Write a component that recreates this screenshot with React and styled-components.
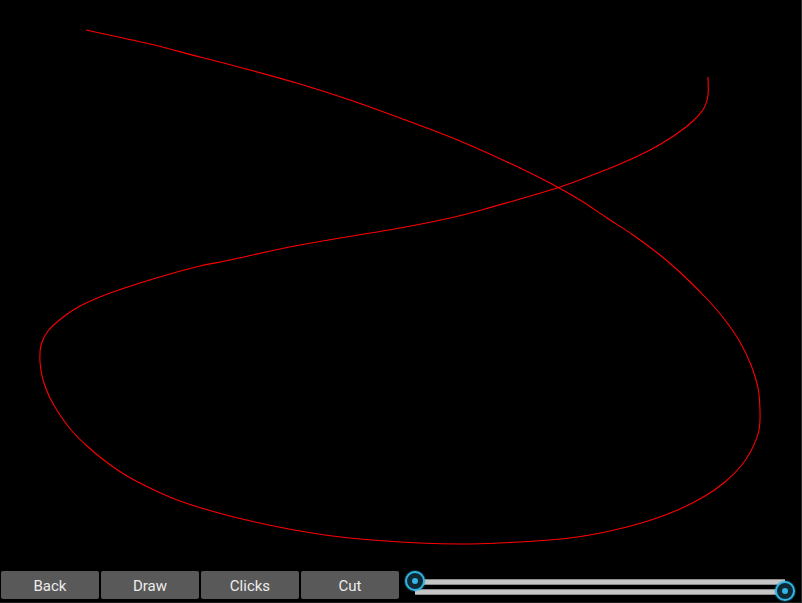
import React from "react";
import styled, { createGlobalStyle } from "styled-components";

const Global = createGlobalStyle`
  html, body { margin: 0; padding: 0; background: #000; }
  * { box-sizing: border-box; }
`;

const Screen = styled.div`
  width: 802px;
  height: 603px;
  background: #000;
  display: flex;
  flex-direction: column;
  border-right: 1px solid #2e2e2e;
  border-bottom: 1px solid #1e1e1e;
  overflow: hidden;
`;

const Canvas = styled.div`
  height: 568px;
  flex: none;
  svg { display: block; }
`;

const Bar = styled.div`
  display: flex;
  align-items: flex-start;
  gap: 2px;
  padding: 3px 0 3px 1px;
  height: 34px;
`;

const Button = styled.button`
  width: 98px;
  height: 28px;
  border: none;
  border-radius: 2px;
  background: #595959;
  color: #ececec;
  font-family: Roboto, "Liberation Sans", sans-serif;
  font-size: 15px;
  padding: 0;
  padding-top: 1px;
  cursor: pointer;
`;

const SliderBox = styled.div`
  position: relative;
  flex: 1;
  align-self: stretch;
  display: flex;
  flex-direction: column;
  gap: 4px;
  padding: 8px 0 0 14px;
`;

const Track = styled.div`
  width: 370px;
  height: 6px;
  background: #c6c6c6;
  border-top: 1px solid #8c8c8c;
  border-bottom: 1px solid #8c8c8c;
`;

const Handle = styled.div`
  position: absolute;
  left: ${(p) => p.$x - 10}px;
  top: ${(p) => p.$y - 10}px;
  width: 20px;
  height: 20px;
  border-radius: 50%;
  border: 2px solid #33b5e5;
  background: #0e2a35;
  box-shadow: 0 0 0 1px rgba(51, 181, 229, 0.25);
  display: flex;
  align-items: center;
  justify-content: center;
  &::after {
    content: "";
    width: 6px;
    height: 6px;
    border-radius: 50%;
    background: #33b5e5;
  }
`;

const pts = [
  [86, 30], [150, 44], [200, 57], [250, 70], [300, 84], [350, 100], [400, 118],
  [460, 141], [520, 168], [550, 183], [580, 200], [607, 218], [633, 235],
  [660, 255], [685, 277], [707, 299], [725, 320], [740, 342], [751, 365],
  [758, 388], [760, 410], [759, 430], [752, 449], [741, 466], [725, 482],
  [705, 496], [680, 509], [648, 521], [610, 531], [570, 538], [520, 542],
  [470, 544], [420, 543], [350, 538], [300, 531], [255, 522], [215, 512],
  [180, 501], [152, 489], [127, 476], [105, 461], [87, 446], [72, 431],
  [60, 415], [50, 398], [43, 380], [40, 362], [41, 345], [48, 331],
  [62, 318], [80, 306], [110, 293], [140, 283], [170, 274], [200, 266],
  [230, 260], [300, 245], [400, 228], [450, 218], [485, 209], [520, 199],
  [557, 188], [590, 176], [620, 164], [650, 150], [675, 135], [693, 121],
  [704, 108], [708, 95], [708, 77],
];

function smoothPath(p) {
  let d = `M${p[0][0]},${p[0][1]}`;
  for (let i = 0; i < p.length - 1; i++) {
    const p0 = p[i - 1] || p[i];
    const p1 = p[i];
    const p2 = p[i + 1];
    const p3 = p[i + 2] || p2;
    const c1x = p1[0] + (p2[0] - p0[0]) / 6;
    const c1y = p1[1] + (p2[1] - p0[1]) / 6;
    const c2x = p2[0] - (p3[0] - p1[0]) / 6;
    const c2y = p2[1] - (p3[1] - p1[1]) / 6;
    d += ` C${c1x.toFixed(1)},${c1y.toFixed(1)} ${c2x.toFixed(1)},${c2y.toFixed(1)} ${p2[0]},${p2[1]}`;
  }
  return d;
}

const curve = smoothPath(pts);

export default function App() {
  return (
    <>
      <Global />
      <Screen>
        <Canvas>
          <svg width="801" height="568" viewBox="0 0 801 568">
            <path d={curve} fill="none" stroke="#ff0000" strokeWidth="1.1" />
          </svg>
        </Canvas>
        <Bar>
          <Button>Back</Button>
          <Button>Draw</Button>
          <Button>Clicks</Button>
          <Button>Cut</Button>
          <SliderBox>
            <Track />
            <Track />
            <Handle $x={14} $y={10} />
            <Handle $x={384} $y={20} />
          </SliderBox>
        </Bar>
      </Screen>
    </>
  );
}
